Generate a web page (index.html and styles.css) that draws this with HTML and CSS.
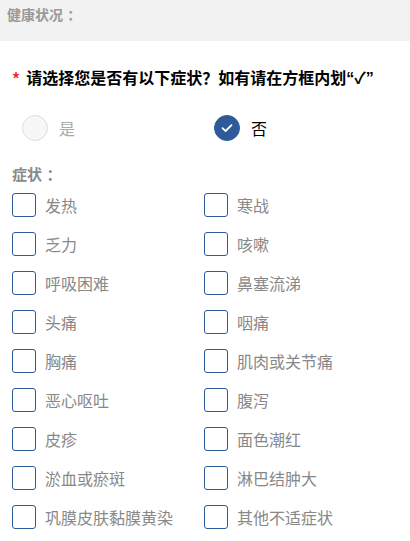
FILE: index.html
```html
<!DOCTYPE html>
<html lang="zh-CN">
<head>
    <meta charset="UTF-8">
    <meta name="viewport" content="width=device-width, initial-scale=1.0">
    <title>健康状况</title>
    <link rel="stylesheet" href="styles.css">
</head>
<body>
    <div class="divtitulo">健康状况<span class="punt">：</span></div>

    <div class="divpregunta">
        <span class="req">*</span>
        <span>请选择您是否有以下症状？如有请在方框内划<span class="latin">“</span>✓<span class="latin">”</span></span>
    </div>

    <div class="divradio">
        <label class="opcion">
            <span class="circulo"></span>
            <span class="gris">是</span>
        </label>
        <label class="opcion">
            <span class="circulo marcado">
                <svg width="14" height="14" viewBox="0 0 14 14"><path d="M2.5 7.2 L5.6 10 L11.5 4.2" fill="none" stroke="#fff" stroke-width="1.8" stroke-linecap="round" stroke-linejoin="round"/></svg>
            </span>
            <span>否</span>
        </label>
    </div>

    <div class="divsintomas">
        <h3>症状<span class="punt">：</span></h3>
        <div class="rejilla">
            <label class="caja"><span class="cuadro"></span>发热</label>
            <label class="caja"><span class="cuadro"></span>寒战</label>
            <label class="caja"><span class="cuadro"></span>乏力</label>
            <label class="caja"><span class="cuadro"></span>咳嗽</label>
            <label class="caja"><span class="cuadro"></span>呼吸困难</label>
            <label class="caja"><span class="cuadro"></span>鼻塞流涕</label>
            <label class="caja"><span class="cuadro"></span>头痛</label>
            <label class="caja"><span class="cuadro"></span>咽痛</label>
            <label class="caja"><span class="cuadro"></span>胸痛</label>
            <label class="caja"><span class="cuadro"></span>肌肉或关节痛</label>
            <label class="caja"><span class="cuadro"></span>恶心呕吐</label>
            <label class="caja"><span class="cuadro"></span>腹泻</label>
            <label class="caja"><span class="cuadro"></span>皮疹</label>
            <label class="caja"><span class="cuadro"></span>面色潮红</label>
            <label class="caja"><span class="cuadro"></span>淤血或瘀斑</label>
            <label class="caja"><span class="cuadro"></span>淋巴结肿大</label>
            <label class="caja"><span class="cuadro"></span>巩膜皮肤黏膜黄染</label>
            <label class="caja"><span class="cuadro"></span>其他不适症状</label>
        </div>
    </div>
</body>
</html>
```

FILE: styles.css
```css
* {
    box-sizing: border-box;
    padding: 0;
    margin: 0;
}

body {
    font-family: "Noto Sans CJK SC", "Liberation Sans", sans-serif;
    background-color: #fff;
    color: #000;
}

.punt {
    padding-left: 0.3em;
}

.latin {
    font-family: "Liberation Sans", sans-serif;
}

.divtitulo {
    background-color: #f2f2f2;
    height: 41px;
    padding: 5px 7px;
    font-size: 14px;
    font-weight: bold;
    color: #999;
    line-height: 18px;
}

.divpregunta {
    display: flex;
    align-items: center;
    gap: 6px;
    padding: 24px 12px 0;
    font-size: 16px;
    font-weight: bold;
    line-height: 24px;
}

.req {
    color: #e5352b;
    font-size: 16px;
}

.divradio {
    display: grid;
    grid-template-columns: 192px 1fr;
    padding: 24px 22px 0;
}

.opcion {
    display: flex;
    align-items: center;
    gap: 11px;
    font-size: 16px;
    height: 26px;
}

.circulo {
    width: 26px;
    height: 26px;
    border-radius: 50%;
    border: 1px solid #ddd;
    background-color: #f7f7f7;
    display: flex;
    align-items: center;
    justify-content: center;
}

.circulo.marcado {
    border-color: #2e5a9a;
    background-color: #2e5a9a;
}

.gris {
    color: #aaa;
}

.divsintomas {
    padding: 22px 12px 0;
}

.divsintomas h3 {
    font-size: 15px;
    color: #888;
    line-height: 22px;
    margin-bottom: 8px;
}

.rejilla {
    display: grid;
    grid-template-columns: 192px 1fr;
    row-gap: 15px;
}

.caja {
    display: flex;
    align-items: center;
    gap: 9px;
    height: 24px;
    font-size: 16px;
    color: #888;
}

.cuadro {
    width: 24px;
    height: 24px;
    border: 1px solid #2e5a9a;
    border-radius: 3px;
    flex-shrink: 0;
}
```
